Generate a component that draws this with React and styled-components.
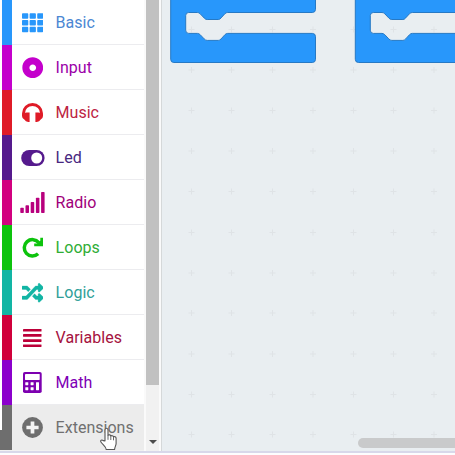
import React from 'react';
import styled, { createGlobalStyle } from 'styled-components';
import { FaTh, FaDotCircle, FaRandom } from 'react-icons/fa';

const GlobalStyle = createGlobalStyle`
  * { box-sizing: border-box; }
  body { margin: 0; overflow: hidden; background: #fff; }
`;

const Editor = styled.div`
  position: relative;
  width: 455px;
  height: 455px;
  overflow: hidden;
  display: grid;
  grid-template-rows: 451px 2px 2px;
  background: #fdfdfe;
  font-family: Roboto, "Liberation Sans", sans-serif;
`;

const Main = styled.main`
  display: grid;
  grid-template-columns: 162px 1fr;
`;

const Sidebar = styled.aside`
  display: grid;
  grid-template-columns: 144px 2px 13px 2px 1px;
  height: 451px;
  background: #f1f1f1;
`;

const ToolboxWrap = styled.div`
  display: grid;
  grid-template-columns: 2px 142px;
  height: 450px;
  background: #fff;
`;

const Edge = styled.div`
  background: linear-gradient(#fff 430px, #6e6e6e 430px);
`;

const Toolbox = styled.nav`
  display: flex;
  flex-direction: column;
`;

const Category = styled.div`
  display: flex;
  align-items: center;
  height: 45px;
  flex: none;
  border-left: 10px solid ${p => p.$color};
  background: ${p => (p.$hover ? '#ececec' : '#fff')};
  color: ${p => p.$text || p.$color};
  box-shadow: ${p => (p.$hover ? 'none' : 'inset 0 -1px #ececef')};
`;

const IconSlot = styled.span`
  display: flex;
  justify-content: center;
  align-items: center;
  width: 41px;
  height: 44px;
  color: ${p => p.$color};
  svg { display: block; flex: none; }
`;

const Label = styled.span`
  margin-left: 2.6px;
  font-size: 16px;
  line-height: 44px;
  letter-spacing: 0.02px;
  white-space: nowrap;
`;

const Gap = styled.div`
  background: #fafafa;
`;

const ScrollTrack = styled.div`
  display: flex;
  flex-direction: column;
  justify-content: space-between;
  align-items: center;
  background: #f1f1f1;
`;

const ScrollThumb = styled.div`
  width: 13px;
  height: 385px;
  background: #c1c1c1;
`;

const DownArrow = styled.div`
  border: 4px solid transparent;
  border-top-color: #4c4c4c;
  border-bottom: 0;
  margin-bottom: 7px;
`;

const Divider = styled.div`
  background: #d5d8d9;
`;

const Workspace = styled.section`
  position: relative;
  height: 451px;
  background: #e9eef1;
  overflow: hidden;
`;

const Canvas = styled.svg`
  display: block;
`;

const HorizontalThumb = styled.div`
  position: absolute;
  left: 196px;
  bottom: 3px;
  width: 120px;
  height: 10px;
  border-radius: 5px;
  background: #c9cacb;
`;

const StatusLine = styled.div`
  background: #d8d8ea;
`;

const Pointer = styled.svg`
  position: absolute;
  left: 99px;
  top: 427px;
`;

const HeadphonesIcon = () => (
  <svg width="21" height="19" viewBox="0 0 21 19" fill="currentColor">
    <path d="M1.5 12.5V10.3a9 8.8 0 0 1 18 0v2.2" fill="none" stroke="currentColor" strokeWidth="2.9" />
    <path d="M7.6 9.6V19H6.2Q3.6 18.7 2.3 16.5Q0 15.4 0 13V11.5Q1.6 9.6 4.8 9.6ZM13.4 9.6V19h1.4q2.6-.3 3.9-2.5Q21 15.4 21 13v-1.5q-1.6-1.9-4.8-1.9Z" />
  </svg>
);

const ToggleIcon = () => (
  <svg width="24" height="16" viewBox="0 0 24 16">
    <rect x=".2" width="23.4" height="16" rx="8" fill="currentColor" />
    <circle cx="15.7" cy="8" r="5.5" fill="#fff" />
  </svg>
);

const SignalIcon = () => (
  <svg width="25" height="21" viewBox="0 0 25 21" fill="currentColor">
    {[5.2, 7.8, 11, 15.3, 21].map((h, i) => (
      <rect key={h} x={0.3 + i * 5.2} y={21 - h} width="3.5" height={h} rx=".7" />
    ))}
  </svg>
);

const RedoIcon = () => (
  <svg width="21" height="21" viewBox="0 0 21 21">
    <path d="M16.8 5.6A8.2 8.2 0 1 0 16.1 16.8" fill="none" stroke="currentColor" strokeWidth="3.5" />
    <path d="M18.3.7H21V9.3H12.2V6.5H15L18.3 3.8Z" fill="currentColor" />
  </svg>
);

const ShuffleIcon = () => <FaRandom size={21.5} stroke="currentColor" strokeWidth={8} />;

const LinesIcon = () => (
  <svg width="19" height="18" viewBox="0 0 19 18" fill="currentColor">
    {[0, 5.1, 10.3, 15.4].map(y => <rect key={y} y={y} width="18.5" height="2.6" rx=".4" />)}
  </svg>
);

const CalculatorIcon = () => (
  <svg width="19" height="21" viewBox="0 0 19 21">
    <rect width="18.7" height="21" rx="1.8" fill="currentColor" />
    <g fill="#fff">
      <rect x="2" y="2" width="14.7" height="6" rx=".4" />
      <rect x="2.3" y="10.2" width="3" height="3" rx=".4" />
      <rect x="7.6" y="10.2" width="3" height="3" rx=".4" />
      <rect x="2.3" y="15.2" width="3" height="3" rx=".4" />
      <rect x="7.6" y="15.2" width="3" height="3" rx=".4" />
      <rect x="13" y="10.2" width="3" height="8" rx=".4" />
    </g>
  </svg>
);

const PlusIcon = () => (
  <svg width="21" height="21" viewBox="0 0 21 21">
    <circle cx="10.5" cy="10.5" r="10.4" fill="currentColor" />
    <path d="M10.5 4.4v12.2M4.4 10.5h12.2" stroke="#f4f4f4" strokeWidth="3.7" />
  </svg>
);

const categories = [
  { name: 'Basic', color: '#2897fb', text: '#4b87d3', icon: <FaTh size={21.5} /> },
  { name: 'Input', color: '#c400cc', text: '#9b00a8', icon: <FaDotCircle size={21.5} /> },
  { name: 'Music', color: '#df1b27', text: '#bd2442', icon: <HeadphonesIcon /> },
  { name: 'Led', color: '#551a8d', text: '#48277f', icon: <ToggleIcon /> },
  { name: 'Radio', color: '#d2007f', iconColor: '#b8007d', text: '#a0007a', icon: <SignalIcon /> },
  { name: 'Loops', color: '#0dc30d', text: '#2fad36', icon: <RedoIcon /> },
  { name: 'Logic', color: '#12b5a4', text: '#309f99', icon: <ShuffleIcon /> },
  { name: 'Variables', color: '#d0003b', iconColor: '#bc0039', text: '#a51240', icon: <LinesIcon /> },
  { name: 'Math', color: '#8b00cc', iconColor: '#7d00b0', text: '#7e00b5', icon: <CalculatorIcon /> },
  { name: 'Extensions', color: '#6e6e6e', text: '#707070', icon: <PlusIcon />, hover: true },
];

const columns = [29.5, 69.5, 110.5, 151, 191.5, 231.5, 272];
const rows = [29.5, 70, 110.5, 151, 191.5, 232.5, 273, 313, 354, 394.5, 434.5];
const gridMarks = columns
  .flatMap(x => rows.map(y => `M${x - 3} ${y}h6M${x} ${y - 3}v6`))
  .join('');

const Block = ({ x }) => (
  <path
    transform={`translate(${x} 0)`}
    d="M.5-5H145.3V9.3q0 3.2-3.2 3.2H57.5q-1.6 0-2.8 1.2l-3.8 4.2q-1.3 1.6-2.8 1.6H37q-1.8 0-3-1.5l-4-4.2q-1.3-1.3-2.8-1.3H18.5q-3 0-3 3V30.2q0 3.2 3 3.2h8.7q1.5 0 2.8 1.3l4 4.2q1.3 1.5 3 1.5h11.1q1.5 0 2.8-1.5l3.8-4.2q1.2-1.3 2.8-1.3h84.6q3.2 0 3.2 3.2V59.3q0 3.2-3.2 3.2H3.7Q.5 62.5.5 59.3Z"
    fill="#2897fb"
    stroke="#2779c4"
    strokeWidth="1"
  />
);

export default function App() {
  return (
    <Editor>
      <GlobalStyle />
      <Main>
        <Sidebar>
          <ToolboxWrap>
            <Edge />
            <Toolbox>
              {categories.map(c => (
                <Category key={c.name} $color={c.color} $text={c.text} $hover={c.hover}>
                  <IconSlot $color={c.iconColor || c.color}>{c.icon}</IconSlot>
                  <Label>{c.name}</Label>
                </Category>
              ))}
            </Toolbox>
          </ToolboxWrap>
          <Gap />
          <ScrollTrack><ScrollThumb /><DownArrow /></ScrollTrack>
          <Gap />
          <Divider />
        </Sidebar>
        <Workspace>
          <Canvas width="293" height="451" viewBox="0 0 293 451">
            <path d={gridMarks} stroke="#dfe3e6" fill="none" />
            <Block x={8.2} />
            <Block x={192.8} />
          </Canvas>
          <HorizontalThumb />
        </Workspace>
      </Main>
      <StatusLine />
      <Pointer width="19" height="25" viewBox="0 0 19 25">
        <path
          d="M6 14V3.2C6 .6 9 .6 9 3.2v5.2c.7-1 2.6-.7 2.8.7.8-.8 2.4-.4 2.7.8 1-.7 2.6-.1 2.6 1.5v5.1c0 2-1.4 3.3-1.5 6H7.2c-.2-2.8-3.5-4.8-5.1-7.2-1.4-2.1.9-3 2.1-1.7z"
          fill="#fff" stroke="#555" strokeWidth="1.1" strokeLinejoin="round"
        />
        <path d="M9 8.5v4.3M11.8 9.2v3.8M14.5 10v3.3" stroke="#666" fill="none" />
      </Pointer>
    </Editor>
  );
}
